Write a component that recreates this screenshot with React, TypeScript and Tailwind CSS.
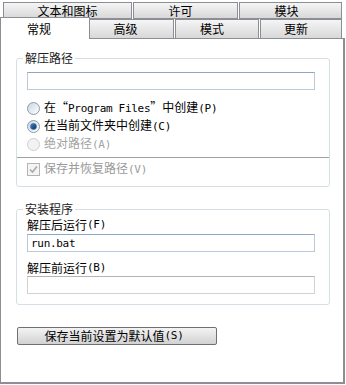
import type { ReactNode } from 'react'

// latin runs are set in a mono face, narrower than the CJK glyphs
function L({ children }: { children: ReactNode }) {
  return <span className="font-['DejaVu_Sans_Mono'] text-[11px] tracking-[-0.3px]">{children}</span>
}

function Radio({ checked = false, disabled = false }: { checked?: boolean; disabled?: boolean }) {
  return (
    <span
      className={
        disabled
          ? 'flex h-[13px] w-[13px] items-center justify-center rounded-full border border-[#cfcfcf] bg-[#f2f2f2]'
          : 'flex h-[13px] w-[13px] items-center justify-center rounded-full border border-[#8e9aa8] bg-linear-to-br from-[#c9d6e4] to-[#ffffff]'
      }
    >
      {checked && (
        <span className="h-[7px] w-[7px] rounded-full border border-[#3a6aa4] bg-linear-to-br from-[#3f7fc9] to-[#0d2f5e]" />
      )}
    </span>
  )
}

const tab =
  'flex h-full items-center justify-center border border-[#8b8e95] bg-linear-to-b from-[#f5f5f5] to-[#d8d8d8] text-black'

const field = 'h-[18px] w-[288px] ml-[10px] border bg-white px-[3px] flex items-center leading-none'

export default function App() {
  return (
    <div
      lang="zh-CN"
      className="h-[385px] w-[346px] overflow-hidden bg-white text-[12px] text-black font-['Noto_Sans_CJK_SC']"
    >
      {/* Tabs, back row */}
      <div className="flex h-[17px] gap-px pl-[3px] mt-[2px]">
        <div className={`${tab} w-[129px]`}>文本和图标</div>
        <div className={`${tab} w-[105px] pr-[10px]`}>许可</div>
        <div className={`${tab} w-[103px] pr-[8px]`}>模块</div>
      </div>

      {/* Tabs, front row */}
      <div className="flex h-[19px] items-end">
        <div className="relative z-10 -mb-px flex h-[22px] w-[90px] items-start justify-center border border-b-0 border-[#8b8e95] bg-white pt-[2px] pr-[12px]">
          常规
        </div>
        <div className="flex h-full gap-px -ml-px">
          <div className={`${tab} w-[85px] border-b-0 pr-[12px]`}>高级</div>
          <div className={`${tab} w-[84px] border-b-0 pr-[10px]`}>模式</div>
          <div className={`${tab} w-[82px] border-b-0 pr-[10px]`}>更新</div>
        </div>
      </div>

      {/* Page */}
      <div className="h-[346px] w-[345px] border border-[#8b8e95] border-r-2 border-b-2 bg-white">
        <fieldset className="ml-[15px] mt-[11px] w-[314px] rounded-[3px] border border-[#d5dfe5] pb-[9px]">
          <legend className="ml-[6px] px-[2px] leading-[16px] text-[#222]">解压路径</legend>
          <div className={`${field} mt-[6px] border-[#b9cadc] border-t-[#8ea7c4]`} />

          <div className="mt-[9px] flex flex-col pl-[10px]">
            <div className="flex h-[18px] items-center gap-[4px]">
              <Radio />
              <span>
                在“<L>Program Files</L>”中创建<L>(P)</L>
              </span>
            </div>
            <div className="flex h-[18px] items-center gap-[4px]">
              <Radio checked />
              <span>
                在当前文件夹中创建<L>(C)</L>
              </span>
            </div>
            <div className="flex h-[18px] items-center gap-[4px] text-[#a3a3a3]">
              <Radio disabled />
              <span>
                绝对路径<L>(A)</L>
              </span>
            </div>
          </div>

          <div className="mt-[4px] h-px bg-[#a0a0a0]" />

          <div className="mt-[3px] flex h-[16px] items-center gap-[4px] pl-[10px] text-[#9a9a9a]">
            <span className="flex h-[13px] w-[13px] items-center justify-center border border-[#b4b4b4] bg-[#f4f4f4]">
              <svg width="11" height="11" viewBox="0 0 11 11">
                <path d="M2 5.5 L4.5 8 L9 2.5" fill="none" stroke="#a9a9a9" strokeWidth="1.6" />
              </svg>
            </span>
            <span>
              保存并恢复路径<L>(V)</L>
            </span>
          </div>
        </fieldset>

        <fieldset className="ml-[15px] mt-[14px] w-[314px] rounded-[3px] border border-[#d5dfe5] pb-[10px]">
          <legend className="ml-[6px] px-[2px] leading-[16px] text-[#222]">安装程序</legend>
          <div className="flex h-[16px] items-center pl-[10px]">
            解压后运行<L>(F)</L>
          </div>
          <div className={`${field} mt-px border-[#b9cadc] border-t-[#8ea7c4]`}>
            <L>run.bat</L>
          </div>
          <div className="mt-[8px] flex h-[16px] items-center pl-[10px]">
            解压前运行<L>(B)</L>
          </div>
          <div className={`${field} border-[#d2d2d2] border-t-[#b4b4b4]`} />
        </fieldset>

        <button className="ml-[16px] mt-[22px] flex h-[18px] w-[200px] items-center justify-center rounded-[2px] border border-[#707070] bg-linear-to-b from-[#f3f3f3] to-[#d2d2d2] pr-[6px] text-black">
          保存当前设置为默认值<L>(S)</L>
        </button>
      </div>
    </div>
  )
}
